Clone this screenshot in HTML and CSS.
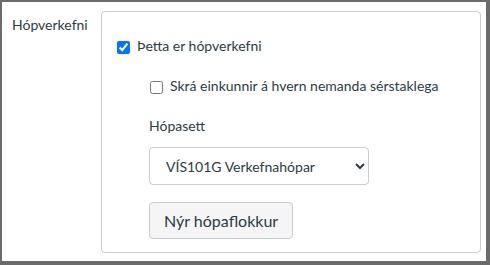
FILE: index.html
```html
<!DOCTYPE html>
<html lang="is">
<head>
    <meta charset="UTF-8">
    <title>Hópverkefni</title>
    <link rel="stylesheet" href="styles.css">
</head>
<body>
    <div class="frame">
        <div class="field-label">Hópverkefni</div>

        <div class="panel">
            <!-- Group assignment toggle -->
            <label class="check-row">
                <input type="checkbox" checked>
                <span>Þetta er hópverkefni</span>
            </label>

            <div class="group-options">
                <label class="check-row">
                    <input type="checkbox">
                    <span>Skrá einkunnir á hvern nemanda sérstaklega</span>
                </label>

                <label class="set-label" for="groupSet">Hópasett</label>
                <select id="groupSet" class="group-select">
                    <option>VÍS101G Verkefnahópar</option>
                </select>

                <button class="new-set">Nýr hópaflokkur</button>
            </div>
        </div>
    </div>
</body>
</html>
```

FILE: styles.css
```css
html, body {
    margin: 0;
    padding: 0;
    background: #ffffff;
}

body {
    font-family: Lato, "Open Sans", sans-serif;
    color: #2d3b45;
    font-size: 14px;
    line-height: 20px;
}

.frame {
    display: flex;
    box-sizing: border-box;
    width: 490px;
    height: 265px;
    border-style: solid;
    border-color: #6b6b6b;
    border-width: 2px 4px 4px 2px;
    padding: 9px 5px 8px 10px;
}

.field-label {
    width: 89px;
    flex: none;
    margin-top: 4px;
}

.panel {
    flex: 1;
    border: 1px solid #c7cdd1;
    border-radius: 4px;
    padding: 24px 15px 14px 15px;
}

.check-row {
    display: flex;
    align-items: center;
    gap: 7px;
    height: 20px;
}

.check-row input {
    width: 13px;
    height: 13px;
    margin: 2px 0 0 0;
}

.group-options {
    padding: 20px 0 0 32px;
    display: flex;
    flex-direction: column;
    align-items: flex-start;
}

.group-options .check-row {
    margin-left: 1px;
}

.set-label {
    display: block;
    margin-top: 20px;
}

.group-select {
    margin-top: 11px;
    width: 220px;
    height: 38px;
    padding: 0 8px 0 12px;
    font-family: Lato, "Open Sans", sans-serif;
    font-size: 14px;
    font-weight: 400;
    color: #2d3b45;
    background: #ffffff;
    border: 1px solid #c7cdd1;
    border-radius: 4px;
}

.new-set {
    margin-top: 17px;
    height: 37px;
    padding: 0 14px;
    font-family: Lato, "Open Sans", sans-serif;
    font-size: 16px;
    font-weight: 400;
    color: #2d3b45;
    background: #f5f5f5;
    border: 1px solid #c7cdd1;
    border-radius: 4px;
    cursor: pointer;
}
```
